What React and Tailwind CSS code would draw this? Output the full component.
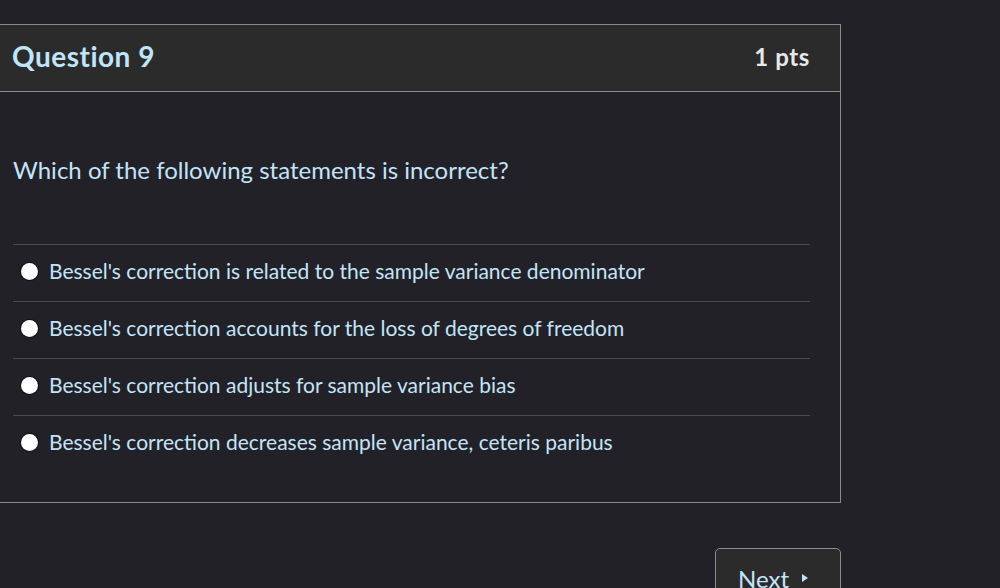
export default function App() {
  const options = [
    "Bessel's correction is related to the sample variance denominator",
    "Bessel's correction accounts for the loss of degrees of freedom",
    "Bessel's correction adjusts for sample variance bias",
    "Bessel's correction decreases sample variance, ceteris paribus",
  ]

  return (
    <div className="w-[1000px] h-[588px] overflow-hidden bg-[#222127] font-['Lato',sans-serif]">
      <div className="pt-[24px] ml-[-10px] w-[851px]">
        {/* Question card */}
        <div className="border border-[#8a8a8a] bg-[#222127]">
          <div className="h-[67px] bg-[#2b2b2b] border-b border-[#8a8a8a] flex items-center justify-between pl-[21px] pr-[30px]">
            <h2 className="text-[28px] font-bold text-[#bfe5fb] tracking-[0.5px] -mt-[4px]">Question 9</h2>
            <span className="text-[24px] font-bold text-[#e8e8e8] tracking-[0.6px] -mt-[2px]">1 pts</span>
          </div>
          <div className="pl-[22px] pr-[30px] pt-[63px] pb-[30px]">
            <p className="text-[24px] text-[#c3e4f8] leading-[30px] mb-[59px]">Which of the following statements is incorrect?</p>
            <div>
              {options.map((o, i) => (
                <div key={i} className="h-[57px] border-t border-[#4a4a4f] flex items-center gap-[11px] pl-[8px] pb-[5px]">
                  <span className="w-[17px] h-[17px] rounded-full bg-white shadow-[0_0_1px_1px_rgba(0,0,0,0.6)] shrink-0 mt-[2px]" />
                  <span className="text-[21px] text-[#c3e4f8]">{o}</span>
                </div>
              ))}
            </div>
          </div>
        </div>
        <div className="flex justify-end mt-[45px]">
          <button className="w-[126px] h-[50px] rounded-[5px] border border-[#8a8a8a] bg-[#2b2b2b] flex items-start justify-start pl-[22px] pt-[12px] gap-[12px] text-[24px] text-[#c3e4f8]">
            <span>Next</span>
            <svg width="8" height="10" viewBox="0 0 8 10" className="mt-[12px]"><path d="M1 1 L7 5 L1 9 Z" fill="#c3e4f8" /></svg>
          </button>
        </div>
      </div>
    </div>
  )
}
